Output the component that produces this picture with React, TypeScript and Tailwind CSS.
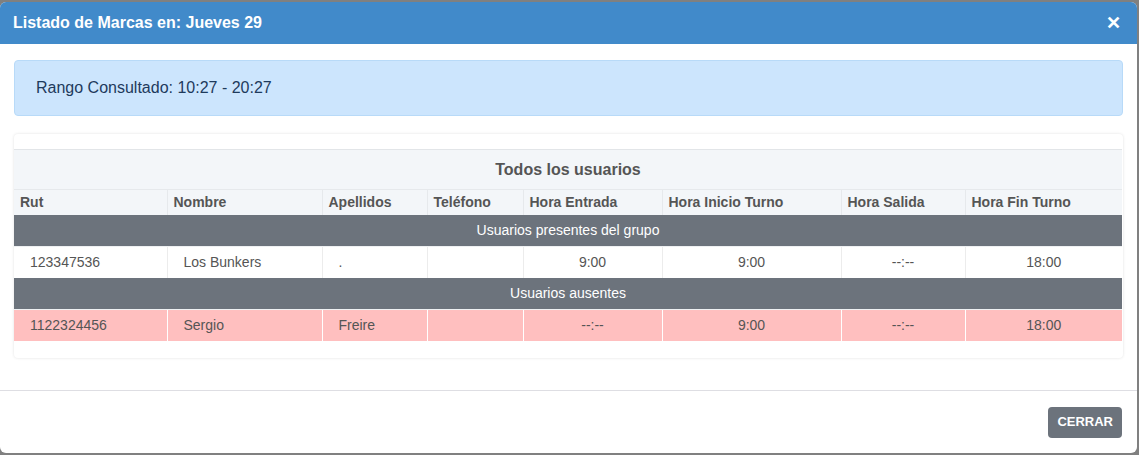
import React from "react";

const cols = [153, 155, 105, 96, 139, 179, 124, 157];
const heads = ["Rut", "Nombre", "Apellidos", "Teléfono", "Hora Entrada", "Hora Inicio Turno", "Hora Salida", "Hora Fin Turno"];

type Row = string[];
const present: Row = ["123347536", "Los Bunkers", ".", "", "9:00", "9:00", "--:--", "18:00"];
const absent: Row = ["1122324456", "Sergio", "Freire", "", "--:--", "9:00", "--:--", "18:00"];

function DataRow({ row, pink }: { row: Row; pink?: boolean }) {
  return (
    <tr className={pink ? "bg-[#ffbfbf]" : "bg-white"}>
      {row.map((c, i) => (
        <td
          key={i}
          className={`h-[31px] text-[14px] text-[#555] border-r last:border-r-0 ${
            pink ? "border-white" : "border-[#ececec]"
          } ${i < 3 ? "pl-[16px]" : "text-center"}`}
        >
          {c}
        </td>
      ))}
    </tr>
  );
}

function GroupRow({ label }: { label: string }) {
  return (
    <tr className="bg-[#6c737c]">
      <td colSpan={8} className="h-[32px] text-center text-[14px] text-white border-b border-[#eef0f2]">
        {label}
      </td>
    </tr>
  );
}

export default function App() {
  return (
    <div className="w-[1139px] h-[455px] bg-[#808080] pt-[2px] overflow-hidden" style={{ fontFamily: '"Liberation Sans", Arial, sans-serif' }}>
      <div className="w-[1137px] h-[451px] bg-white rounded-[6px] overflow-hidden flex flex-col">
        <div className="h-[42px] bg-[#418aca] flex items-center justify-between pl-[13px] pr-[16px]">
          <h4 className="text-white font-bold text-[16px]">Listado de Marcas en: Jueves 29</h4>
          <span className="text-white font-bold text-[18px] leading-none">✕</span>
        </div>
        <div className="px-[14px] pt-[16px] pb-[32px] border-b border-[#dedee3]">
          <div className="h-[56px] bg-[#cce5fd] border border-[#b8daf8] rounded-[4px] flex items-center pl-[21px] text-[16px] text-[#1e3a5c]">
            Rango Consultado: 10:27 - 20:27
          </div>
          <div className="mt-[18px] bg-white rounded-[4px] shadow-[0_0_3px_rgba(0,0,0,0.12)] pt-[15px] pb-[17px]">
            <table className="w-[1108px] table-fixed border-collapse">
              <colgroup>
                {cols.map((w, i) => (
                  <col key={i} style={{ width: w }} />
                ))}
              </colgroup>
              <thead>
                <tr className="bg-[#f3f6f9] border-t border-[#e2e5e8]">
                  <th colSpan={8} className="h-[40px] text-center text-[16px] font-bold text-[#555]">
                    Todos los usuarios
                  </th>
                </tr>
                <tr className="bg-[#f3f6f9]">
                  {heads.map((h, i) => (
                    <th
                      key={i}
                      className="h-[25px] text-left pl-[6px] text-[14px] font-bold text-[#555] border-t border-r last:border-r-0 border-[#e6e9ec]"
                    >
                      {h}
                    </th>
                  ))}
                </tr>
              </thead>
              <tbody>
                <GroupRow label="Usuarios presentes del grupo" />
                <DataRow row={present} />
                <GroupRow label="Usuarios ausentes" />
                <DataRow row={absent} pink />
              </tbody>
            </table>
          </div>
        </div>
        <div className="flex-1 flex items-start justify-end pt-[16px] pr-[15px]">
          <button className="h-[31px] px-[9px] bg-[#6c737c] rounded-[4px] text-white text-[13px] font-bold">
            CERRAR
          </button>
        </div>
      </div>
    </div>
  );
}
